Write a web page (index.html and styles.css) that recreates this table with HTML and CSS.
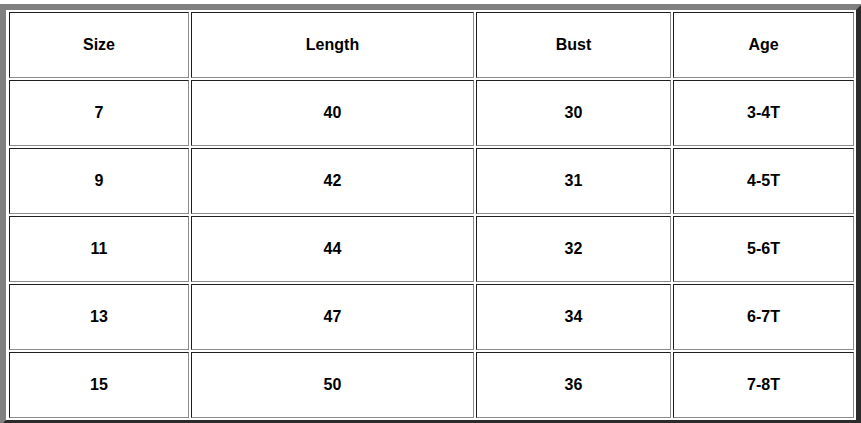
FILE: index.html
```html
<!DOCTYPE html>
<html>
<head>
<meta charset="utf-8">
<link rel="stylesheet" href="styles.css">
</head>
<body>
<div class="page">
<table class="size-chart">
  <colgroup>
    <col class="c1"><col class="c2"><col class="c3"><col class="c4">
  </colgroup>
  <tr><td>Size</td><td>Length</td><td>Bust</td><td>Age</td></tr>
  <tr><td>7</td><td>40</td><td>30</td><td>3-4T</td></tr>
  <tr><td>9</td><td>42</td><td>31</td><td>4-5T</td></tr>
  <tr><td>11</td><td>44</td><td>32</td><td>5-6T</td></tr>
  <tr><td>13</td><td>47</td><td>34</td><td>6-7T</td></tr>
  <tr><td>15</td><td>50</td><td>36</td><td>7-8T</td></tr>
</table>
</div>
</body>
</html>
```
FILE: styles.css
```css
html, body {
  margin: 0;
  padding: 0;
  background: #ffffff;
  overflow: hidden;
}
.page {
  padding-top: 4px;
}
.size-chart {
  width: 862px;
  table-layout: fixed;
  border-collapse: separate;
  border-spacing: 2px;
  padding: 0 0 0 1px;
  border-style: solid;
  border-width: 6px;
  border-color: #808080 #2b2b2b #2b2b2b #808080;
  font-family: "Liberation Sans", Arial, sans-serif;
  font-weight: bold;
  font-size: 16px;
  color: #000;
}
.c1 { width: 180px; }
.c2 { width: 283px; }
.c3 { width: 195px; }
.c4 { width: 181px; }
.size-chart td {
  box-sizing: border-box;
  height: 66px;
  padding: 0;
  text-align: center;
  vertical-align: middle;
  border-style: solid;
  border-width: 1px;
  border-color: #1e1e1e #8c8c8c #8c8c8c #1e1e1e;
}
```
